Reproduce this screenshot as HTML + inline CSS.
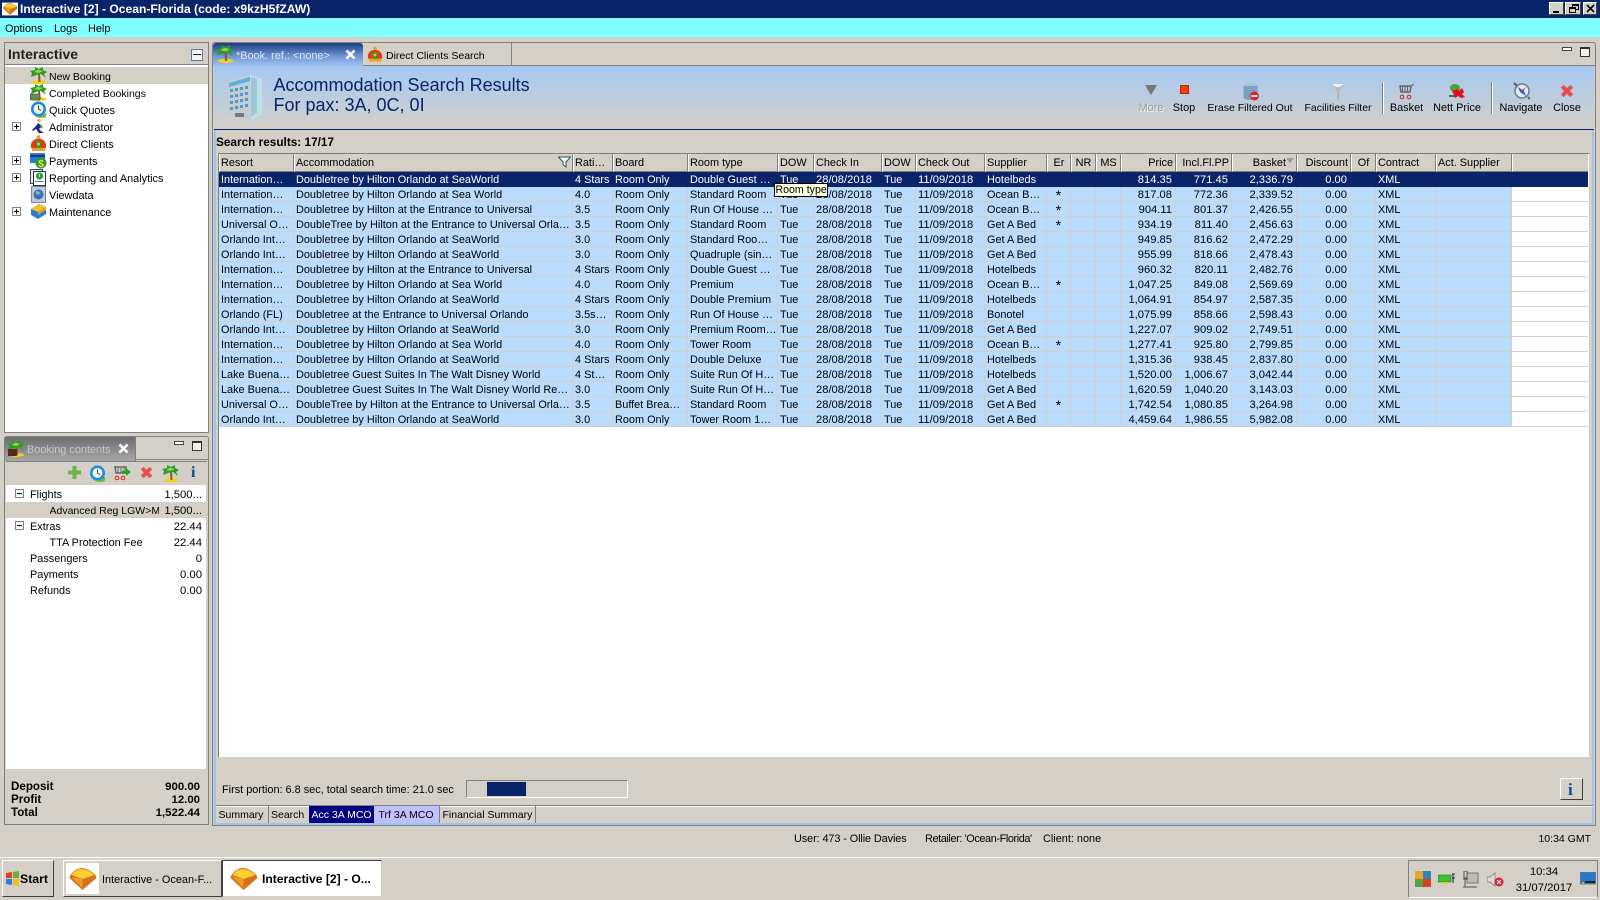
<!DOCTYPE html>
<html><head><meta charset="utf-8"><title>Interactive</title>
<style>
*{box-sizing:border-box}
html,body{margin:0;padding:0}
body{width:1600px;height:900px;overflow:hidden;background:#d4d0c8;position:relative;font:10.9px "Liberation Sans",sans-serif;color:#000}
.a,.t,svg.i{position:absolute}
.t{white-space:nowrap;line-height:14px;margin-top:1px}
.r{text-align:right}
.c{text-align:center;transform:translateX(-50%)}
.v{font-size:11.3px}
.bt{font-size:10.500px}
table{border-collapse:separate;border-spacing:0;table-layout:fixed;position:absolute;left:219px;width:1369px}
td{padding:2px 0 0 2px;height:15px;line-height:12px;white-space:nowrap;overflow:hidden;background:#badcff;border-right:1px solid #d4d0c8;border-bottom:1px solid #d4d0c8}
td.n{text-align:right;padding:2px 3px 0 0;font-size:11.2px}
td:nth-child(7),td:nth-child(9){font-size:11.2px}
td.m{text-align:center;padding:3px 0 0 0;line-height:11px;font-size:14px}
td.w{background:#fff;border-right:0}
tr.s td{background:#0a246a;color:#fff;border-color:#0a246a}
#h td{height:18px;background:#d4d0c8;border-bottom:1px solid #808080;border-right:1px solid #808080;border-left:1px solid #fff;line-height:16px;padding:1px 0 0 1px;font-size:10.9px}
#h td.n{padding:1px 2px 0 0}
.box{border:1px solid #808080}
.pm{position:absolute;width:9px;height:9px;border:1px solid #808080;background:#fff}
.pm:before{content:"";position:absolute;left:1px;top:3px;width:5px;height:1px;background:#000}
.pm.p:after{content:"";position:absolute;left:3px;top:1px;width:1px;height:5px;background:#000}
.btn{position:absolute;background:#d4d0c8;border:1px solid;border-color:#fff #404040 #404040 #fff}
</style></head><body>
<svg width="0" height="0" style="position:absolute"><defs>
<symbol id="palm" viewBox="0 0 17 17"><ellipse cx="9" cy="15" rx="7.500" ry="2" fill="#f0d020"/><path d="M8 6 L10 6 L10.500 15 L8.500 15Z" fill="#8a5a20"/><path d="M9 7 L1 10 L2 6 L0 4 L5 3 L5 0 L9 2 L13 0 L13 3 L17 5 L14 7 L16 11 L11 7Z" fill="#2e9a28"/><path d="M9 6 L4 5 L8 2.500 L13 4Z" fill="#8cd448"/></symbol>
<symbol id="man" viewBox="0 0 17 17"><circle cx="8.500" cy="2" r="1.800" fill="#f0a020"/><path d="M1 10a7 6 0 0 1 15 0v3H1Z" fill="#e04010"/><path d="M6 6h5v8H6Z" fill="#2a9a40"/><path d="M2 13h13v3H2Z" fill="#f0a020"/><circle cx="8.500" cy="9" r="1.500" fill="#f0c020"/></symbol>
<symbol id="clock" viewBox="0 0 17 17"><circle cx="8.500" cy="8" r="7.500" fill="#1a8ae0"/><circle cx="8.500" cy="8" r="5" fill="#f4f4f4"/><path d="M8.500 4.500V8L11 9.500" stroke="#444" fill="none"/><path d="M1 10a8 8 0 0 0 14 2l1.500 1-1 3.500-5.500.5Q5 17 1 10Z" fill="#60c030"/></symbol>
<symbol id="diamond" viewBox="0 0 30 24"><path d="M3 8 Q8 1 15 1 Q22 2 28 8 L29 11 L15 23 L2 11Z" fill="#d8701a"/><path d="M4 8 Q8 2 15 2 Q22 3 27 8 L15 12Z" fill="#fbd030"/><path d="M4 10 L15 12 L15 21Z" fill="#ec9a28"/></symbol>
<symbol id="x" viewBox="0 0 15 15"><path d="M1 4 L4 1 L7.500 4.500 L11 1 L14 4 L10.500 7.500 L14 11 L11 14 L7.500 10.500 L4 14 L1 11 L4.500 7.500Z" fill="#ec4a50" stroke="#c88" stroke-width=".5"/></symbol>
</defs></svg>

<!-- title bar -->
<div class="a" style="left:0;top:0;width:1600px;height:18px;background:#0a246a"></div>
<svg class="i" style="left:2px;top:1px" width="16" height="16" viewBox="0 0 30 24"><rect width="30" height="24" fill="#fff"/><use href="#diamond" width="30" height="24"/></svg>
<div class="t" style="left:20px;top:1px;color:#fff;font-size:12.100px;font-weight:bold">Interactive [2] - Ocean-Florida (code: x9kzH5fZAW)</div>
<div class="btn" style="left:1549px;top:2px;width:15px;height:13px"><div class="a" style="left:3px;top:8px;width:6px;height:2px;background:#000"></div></div>
<div class="btn" style="left:1565px;top:2px;width:16px;height:13px"><div class="a" style="left:6px;top:1px;width:7px;height:6px;border:1px solid #000;border-top-width:2px"></div><div class="a" style="left:3px;top:4px;width:7px;height:6px;border:1px solid #000;border-top-width:2px;background:#d4d0c8"></div></div>
<div class="btn" style="left:1583px;top:2px;width:14px;height:13px"><svg class="i" style="left:2px;top:1px" width="9" height="9"><path d="M1 1L8 8M8 1L1 8" stroke="#000" stroke-width="1.600"/></svg></div>
<!-- menu -->
<div class="a" style="left:0;top:18px;width:1600px;height:19px;background:#80ffff"></div>
<div class="t" style="left:5px;top:21px">Options</div>
<div class="t" style="left:54px;top:21px">Logs</div>
<div class="t" style="left:88px;top:21px">Help</div>

<!-- left panel -->
<div class="a box" style="left:4px;top:42px;width:205px;height:391px;background:#fff;border-color:#808080"></div>
<div class="a" style="left:5px;top:43px;width:203px;height:22px;background:#d4d0c8;border-bottom:1px solid #808080"></div>
<div class="t" style="left:8px;top:46px;font-size:14px;font-weight:bold;color:#222">Interactive</div>
<div class="a" style="left:191px;top:49px;width:12px;height:12px;border:1px solid #5a7aa8;background:#f4f4f4"><div class="a" style="left:1px;top:4px;width:8px;height:1px;background:#222"></div></div>
<div class="a" style="left:5px;top:67px;width:203px;height:17px;background:#d4d0c8"></div>
<svg class="i" style="left:30px;top:67px" width="17" height="17"><use href="#palm"/></svg>
<div class="t bt" style="left:49px;top:69px">New Booking</div>
<svg class="i" style="left:30px;top:84px" width="17" height="17"><use href="#palm"/><rect x="0" y="10" width="10" height="6" fill="#6a8a5a" stroke="#333" stroke-width=".5"/></svg>
<div class="t bt" style="left:49px;top:86px">Completed Bookings</div>
<svg class="i" style="left:30px;top:101px" width="17" height="17"><use href="#clock"/></svg>
<div class="t" style="left:49px;top:103px">Quick Quotes</div>
<div class="pm p" style="left:12px;top:122px"></div>
<svg class="i" style="left:30px;top:118px" width="17" height="17"><circle cx="9" cy="2.500" r="1.800" fill="#e8b060"/><path d="M8 5L12 8L9 11L13 15H9L6 11L3 13L2 12L6 8Z" fill="#1a2a8a"/><path d="M10 6l3 3-2 2Z" fill="#50a030"/><path d="M10 13l4 2H8Z" fill="#222"/></svg>
<div class="t" style="left:49px;top:120px">Administrator</div>
<svg class="i" style="left:30px;top:135px" width="17" height="17"><use href="#man"/></svg>
<div class="t" style="left:49px;top:137px">Direct Clients</div>
<div class="pm p" style="left:12px;top:156px"></div>
<svg class="i" style="left:30px;top:152px" width="17" height="17"><rect x="0" y="1" width="15" height="10" fill="#2a7ad8"/><rect x="0" y="3" width="15" height="2" fill="#123a80"/><circle cx="11" cy="11" r="5.500" fill="#2a9a30"/><text x="11" y="15" font-size="10" font-weight="bold" fill="#f0e040" text-anchor="middle" font-family="Liberation Sans">$</text></svg>
<div class="t" style="left:49px;top:154px">Payments</div>
<div class="pm p" style="left:12px;top:173px"></div>
<svg class="i" style="left:30px;top:169px" width="17" height="17"><rect x="0.500" y="0.500" width="12" height="14" fill="#e8eef4" stroke="#345"/><rect x="3.500" y="2.500" width="12" height="14" fill="#fff" stroke="#234"/><circle cx="9.500" cy="7" r="3.500" fill="#20a030"/><rect x="9" y="5" width="1" height="3" fill="#fff"/><rect x="5" y="12" width="9" height="1" fill="#678"/></svg>
<div class="t" style="left:49px;top:171px">Reporting and Analytics</div>
<svg class="i" style="left:30px;top:186px" width="17" height="17"><rect x="1.500" y="0.500" width="14" height="16" fill="#c0c8d8" stroke="#7a88a8"/><circle cx="8.500" cy="8.500" r="5" fill="#3a70c8"/><path d="M6 5l4 1-1 3-3-1Z" fill="#80c870"/></svg>
<div class="t" style="left:49px;top:188px">Viewdata</div>
<div class="pm p" style="left:12px;top:207px"></div>
<svg class="i" style="left:30px;top:203px" width="17" height="17"><path d="M1 6L9 1L16 4L16 11L8 16L1 12Z" fill="#2a7ad0"/><path d="M1 6L9 1L16 4L8 9Z" fill="#f0c030"/><path d="M8 9L16 4L16 7L8 12Z" fill="#e0a020"/></svg>
<div class="t" style="left:49px;top:205px">Maintenance</div>

<!-- booking panel -->
<div class="a box" style="left:4px;top:436px;width:205px;height:389px;border-radius:3px 3px 0 0"></div>
<div class="a" style="left:5px;top:437px;width:131px;height:24px;background:linear-gradient(#6e6e6e,#8f8f8f 60%,#a8a8a8);border-right:1px solid #808080"></div>
<div class="a" style="left:136px;top:459px;width:72px;height:1px;background:#808080"></div>
<svg class="i" style="left:7px;top:440px" width="18" height="17"><use href="#palm"/><rect x="1" y="9" width="9" height="7" fill="#5a2a18"/></svg>
<div class="t" style="left:27px;top:442px;color:#c8c8c8">Booking contents</div>
<svg class="i" style="left:118px;top:443px" width="11" height="11"><path d="M1.500 1.500L9.500 9.500M9.500 1.500L1.500 9.500" stroke="#fff" stroke-width="2.600"/></svg>
<div class="a" style="left:174px;top:441px;width:10px;height:4px;border:1px solid #444;background:#fff"></div>
<div class="a" style="left:192px;top:441px;width:10px;height:10px;border:1px solid #333;border-top-width:2px;background:#f0f0f0"></div>
<div class="a" style="left:6px;top:461px;width:201px;height:24px;background:#d4d0c8;border-top:1px solid #808080"></div>
<svg class="i" style="left:68px;top:466px" width="13" height="13"><path d="M4.500 0h4v4.500h4.500v4h-4.500v4.500h-4v-4.500H0v-4h4.500Z" fill="#74b050"/></svg>
<svg class="i" style="left:89px;top:465px" width="17" height="17"><use href="#clock"/></svg>
<svg class="i" style="left:114px;top:465px" width="17" height="16"><path d="M1 2h11v6H2Z" fill="none" stroke="#666" stroke-width="1.500"/><path d="M4 3v5M7 3v5M10 3v5" stroke="#666"/><circle cx="3" cy="13" r="1.800" fill="none" stroke="#e02020"/><circle cx="9" cy="13" r="1.800" fill="none" stroke="#e02020"/><path d="M8 6h4V3l5 4-5 4V8H8Z" fill="#10b020"/></svg>
<svg class="i" style="left:140px;top:466px" width="13" height="13" viewBox="0 0 15 15"><use href="#x"/></svg>
<svg class="i" style="left:162px;top:465px" width="17" height="17"><use href="#palm"/></svg>
<div class="t" style="left:191px;top:463px;font:bold 16px 'Liberation Serif',serif;line-height:17px;color:#0a4a9a">i</div>
<div class="a" style="left:6px;top:485px;width:200px;height:284px;background:#fff"></div>
<div class="a" style="left:6px;top:502px;width:200px;height:16px;background:#d4d0c8"></div>
<div class="pm" style="left:15px;top:489px"></div>
<div class="t" style="left:30px;top:487px">Flights</div><div class="t r v" style="right:1398px;top:487px">1,500...</div>
<div class="t bt" style="left:49.500px;top:503px;width:109px;overflow:hidden">Advanced Reg LGW&gt;MCO</div><div class="t r v" style="right:1398px;top:503px">1,500...</div>
<div class="pm" style="left:15px;top:521px"></div>
<div class="t" style="left:30px;top:519px">Extras</div><div class="t r v" style="right:1398px;top:519px">22.44</div>
<div class="t" style="left:49.500px;top:535px">TTA Protection Fee</div><div class="t r v" style="right:1398px;top:535px">22.44</div>
<div class="t" style="left:30px;top:551px">Passengers</div><div class="t r v" style="right:1398px;top:551px">0</div>
<div class="t" style="left:30px;top:567px">Payments</div><div class="t r v" style="right:1398px;top:567px">0.00</div>
<div class="t" style="left:30px;top:583px">Refunds</div><div class="t r v" style="right:1398px;top:583px">0.00</div>
<div class="t" style="left:11px;top:779px;font-weight:bold;font-size:11.6px">Deposit</div><div class="t r" style="right:1400px;top:779px;font-weight:bold;font-size:11.400px">900.00</div>
<div class="t" style="left:11px;top:792px;font-weight:bold;font-size:11.6px">Profit</div><div class="t r" style="right:1400px;top:792px;font-weight:bold;font-size:11.400px">12.00</div>
<div class="t" style="left:11px;top:805px;font-weight:bold;font-size:11.6px">Total</div><div class="t r" style="right:1400px;top:805px;font-weight:bold;font-size:11.400px">1,522.44</div>

<!-- main panel -->
<div class="a box" style="left:212px;top:42px;width:1384px;height:784px;border-radius:3px 3px 0 0"></div>
<div class="a" style="left:214px;top:65px;width:1380px;height:760px;border:2px solid #9cc4f0;border-top:0"></div>
<div class="a" style="left:213px;top:65px;width:1382px;height:1px;background:#808080"></div>
<div class="a" style="left:214px;top:66px;width:1380px;height:64px;background:linear-gradient(#a6c8f4,#d4d0c8);border-bottom:1px solid #0a246a"></div>
<div class="a" style="left:213px;top:43px;width:150px;height:24px;background:linear-gradient(180deg,#1b3c80,#6f96d4 55%,#a6c8f4);border-radius:3px 3px 0 0"></div>
<svg class="i" style="left:216px;top:45px" width="18" height="18"><use href="#palm"/></svg>
<div class="t" style="left:236px;top:48px;color:#dde8f8">*Book. ref.: &lt;none&gt;</div>
<svg class="i" style="left:345px;top:49px" width="11" height="11"><path d="M1.500 1.500L9.500 9.500M9.500 1.500L1.500 9.500" stroke="#fff" stroke-width="2.600"/></svg>
<div class="a" style="left:363px;top:43px;width:149px;height:23px;border-right:1px solid #808080;border-bottom:1px solid #808080"></div>
<svg class="i" style="left:367px;top:46px" width="16" height="17"><use href="#man"/></svg>
<div class="t bt" style="left:386px;top:48px">Direct Clients Search</div>
<div class="a" style="left:1562px;top:47px;width:10px;height:4px;border:1px solid #444;background:#fff"></div>
<div class="a" style="left:1580px;top:47px;width:10px;height:10px;border:1px solid #333;border-top-width:2px;background:#f0f0f0"></div>

<svg class="i" style="left:227px;top:73px" width="36" height="48" viewBox="0 0 36 48"><path d="M1 8L23 2L35 6V42L24 47L1 42Z" fill="#c4ccd0"/><path d="M23 2L35 6V42L24 47Z" fill="#bcdfe8"/><path d="M24 4L30 6V40L24 44Z" fill="#9cc8d4"/><path d="M2 10L23 4V8L2 14Z" fill="#58b0e0"/><g fill="#4c9cd4"><rect x="3" y="16" width="3" height="3"/><rect x="8" y="15" width="3" height="3"/><rect x="13" y="14" width="3" height="3"/><rect x="18" y="13" width="3" height="3"/><rect x="3" y="22" width="3" height="3"/><rect x="8" y="21" width="3" height="3"/><rect x="13" y="20" width="3" height="3"/><rect x="18" y="19" width="3" height="3"/><rect x="3" y="28" width="3" height="3"/><rect x="8" y="27" width="3" height="3"/><rect x="13" y="26" width="3" height="3"/><rect x="18" y="25" width="3" height="3"/><rect x="3" y="34" width="3" height="3"/><rect x="8" y="33" width="3" height="3"/><rect x="13" y="32" width="3" height="3"/><rect x="18" y="31" width="3" height="3"/></g><rect x="8" y="40" width="9" height="4" fill="#778"/></svg>
<div class="t" style="left:273.500px;top:74px;font-size:18px;line-height:20px;color:#0a246a">Accommodation Search Results</div>
<div class="t" style="left:273.500px;top:94px;font-size:18px;line-height:20px;color:#0a246a">For pax: 3A, 0C, 0I</div>

<svg class="i" style="left:1145px;top:85px" width="12" height="11"><path d="M0 0H12L6 10Z" fill="#777"/></svg>
<div class="t c" style="left:1151px;top:100px;color:#9a9a9a;text-shadow:1px 1px 0 #f4f4f4">More</div>
<div class="a" style="left:1180px;top:85px;width:9px;height:9px;background:#f04010;border:1px solid #c02000"></div>
<div class="t c" style="left:1184px;top:100px">Stop</div>
<svg class="i" style="left:1243px;top:83px" width="17" height="18"><ellipse cx="7.500" cy="3" rx="7" ry="2.500" fill="#a8c4d8"/><path d="M.5 3V15c0 1 3 2 7 2s7-1 7-2V3" fill="#7ca0c0"/><circle cx="11.500" cy="13" r="4.500" fill="#e02020"/><rect x="8.500" y="12" width="6" height="2" fill="#fff"/></svg>
<div class="t c bt" style="left:1250px;top:100px">Erase Filtered Out</div>
<svg class="i" style="left:1331px;top:83px" width="14" height="18"><path d="M1 1H13L8.500 8V17H6V8Z" fill="#b8b8b8"/><path d="M1 1H13L9 4H5Z" fill="#f0f0f0"/></svg>
<div class="t c bt" style="left:1338px;top:100px">Facilities Filter</div>
<div class="a" style="left:1382px;top:82px;width:1px;height:32px;background:#808080"></div>
<div class="a" style="left:1383px;top:82px;width:1px;height:32px;background:#fff"></div>
<svg class="i" style="left:1399px;top:83px" width="16" height="17"><path d="M1 3H12L11 9H2Z" fill="none" stroke="#666" stroke-width="1.500"/><path d="M3.500 3v6M6 3v6M8.500 3v6M12 3L15 1" stroke="#666"/><circle cx="3" cy="14" r="1.800" fill="none" stroke="#e02020"/><circle cx="10" cy="14" r="1.800" fill="none" stroke="#e02020"/></svg>
<div class="t c" style="left:1406.500px;top:100px">Basket</div>
<svg class="i" style="left:1449px;top:83px" width="17" height="17"><ellipse cx="6" cy="5" rx="5" ry="4" fill="#50a030"/><path d="M0 12h8v2H0Z" fill="#308030"/><path d="M3 8L8 6L10 8L13 5L15 9L13 11L16 14L12 15L9 13L6 15L5 12Z" fill="#e01020"/></svg>
<div class="t c" style="left:1457px;top:100px">Nett Price</div>
<div class="a" style="left:1491px;top:82px;width:1px;height:32px;background:#808080"></div>
<div class="a" style="left:1492px;top:82px;width:1px;height:32px;background:#fff"></div>
<svg class="i" style="left:1513px;top:82px" width="17" height="18"><circle cx="9" cy="9" r="7" fill="#dcecf8" stroke="#6a7a90" stroke-width="1.500"/><path d="M5 5L11 9L13 14L7 10Z" fill="#3060c0"/><path d="M9 8L13 5L10 10Z" fill="#e04020"/><path d="M1 1L4 4M15 15l2 2" stroke="#7a5a30" stroke-width="2"/></svg>
<div class="t c" style="left:1521px;top:100px">Navigate</div>
<svg class="i" style="left:1560px;top:84px" width="14" height="14" viewBox="0 0 15 15"><use href="#x"/></svg>
<div class="t c" style="left:1567px;top:100px">Close</div>

<div class="t" style="left:216px;top:134px;font-weight:bold;font-size:11.800px">Search results: 17/17</div>

<!-- grid -->
<div class="a" style="left:218px;top:153px;width:1372px;height:605px;background:#fff;border:1px solid #808080;border-right-color:#d4d0c8;border-bottom-color:#d4d0c8"></div>
<table id="h" style="top:154px"><colgroup><col style="width:75px"><col style="width:279px"><col style="width:40px"><col style="width:75px"><col style="width:90px"><col style="width:36px"><col style="width:68px"><col style="width:34px"><col style="width:69px"><col style="width:62px"><col style="width:24px"><col style="width:25px"><col style="width:25px"><col style="width:55px"><col style="width:56px"><col style="width:65px"><col style="width:54px"><col style="width:25px"><col style="width:60px"><col style="width:76px"><col style="width:76px"></colgroup>
<tr><td>Resort</td><td>Accommodation</td><td>Rati…</td><td>Board</td><td>Room type</td><td>DOW</td><td>Check In</td><td>DOW</td><td>Check Out</td><td>Supplier</td><td style="text-align:center;padding:1px 0 0">Er</td><td style="text-align:center;padding:1px 0 0">NR</td><td style="text-align:center;padding:1px 0 0">MS</td><td class="n">Price</td><td class="n">Incl.Fl.PP</td><td class="n" style="padding-right:10px">Basket</td><td class="n">Discount</td><td style="text-align:center;padding:1px 0 0">Of</td><td>Contract</td><td>Act. Supplier</td><td style="border-right:0"></td></tr></table>
<svg class="i" style="left:558px;top:156px" width="13" height="12"><path d="M.5 1H12.500L8 6V11L5 8.500V6Z" fill="#fff" stroke="#2a5a5a"/></svg>
<svg class="i" style="left:1286px;top:158px" width="8" height="6"><path d="M0 0H8L4 5Z" fill="#999"/></svg>
<table style="top:172px"><colgroup><col style="width:75px"><col style="width:279px"><col style="width:40px"><col style="width:75px"><col style="width:90px"><col style="width:36px"><col style="width:68px"><col style="width:34px"><col style="width:69px"><col style="width:62px"><col style="width:24px"><col style="width:25px"><col style="width:25px"><col style="width:55px"><col style="width:56px"><col style="width:65px"><col style="width:54px"><col style="width:25px"><col style="width:60px"><col style="width:76px"><col style="width:76px"></colgroup>
<tr class="s"><td>Internation…</td><td>Doubletree by Hilton Orlando at SeaWorld</td><td>4 Stars</td><td>Room Only</td><td>Double Guest …</td><td>Tue</td><td>28/08/2018</td><td>Tue</td><td>11/09/2018</td><td>Hotelbeds</td><td class="m"></td><td></td><td></td><td class="n">814.35</td><td class="n">771.45</td><td class="n">2,336.79</td><td class="n">0.00</td><td></td><td>XML</td><td></td><td class="w" style="background:#0a246a"></td></tr>
<tr><td>Internation…</td><td>Doubletree by Hilton Orlando at Sea World</td><td>4.0</td><td>Room Only</td><td>Standard Room</td><td>Tue</td><td>28/08/2018</td><td>Tue</td><td>11/09/2018</td><td>Ocean B…</td><td class="m">*</td><td></td><td></td><td class="n">817.08</td><td class="n">772.36</td><td class="n">2,339.52</td><td class="n">0.00</td><td></td><td>XML</td><td></td><td class="w"></td></tr>
<tr><td>Internation…</td><td>Doubletree by Hilton at the Entrance to Universal</td><td>3.5</td><td>Room Only</td><td>Run Of House …</td><td>Tue</td><td>28/08/2018</td><td>Tue</td><td>11/09/2018</td><td>Ocean B…</td><td class="m">*</td><td></td><td></td><td class="n">904.11</td><td class="n">801.37</td><td class="n">2,426.55</td><td class="n">0.00</td><td></td><td>XML</td><td></td><td class="w"></td></tr>
<tr><td>Universal O…</td><td>DoubleTree by Hilton at the Entrance to Universal Orla…</td><td>3.5</td><td>Room Only</td><td>Standard Room</td><td>Tue</td><td>28/08/2018</td><td>Tue</td><td>11/09/2018</td><td>Get A Bed</td><td class="m">*</td><td></td><td></td><td class="n">934.19</td><td class="n">811.40</td><td class="n">2,456.63</td><td class="n">0.00</td><td></td><td>XML</td><td></td><td class="w"></td></tr>
<tr><td>Orlando Int…</td><td>Doubletree by Hilton Orlando at SeaWorld</td><td>3.0</td><td>Room Only</td><td>Standard Roo…</td><td>Tue</td><td>28/08/2018</td><td>Tue</td><td>11/09/2018</td><td>Get A Bed</td><td class="m"></td><td></td><td></td><td class="n">949.85</td><td class="n">816.62</td><td class="n">2,472.29</td><td class="n">0.00</td><td></td><td>XML</td><td></td><td class="w"></td></tr>
<tr><td>Orlando Int…</td><td>Doubletree by Hilton Orlando at SeaWorld</td><td>3.0</td><td>Room Only</td><td>Quadruple (sin…</td><td>Tue</td><td>28/08/2018</td><td>Tue</td><td>11/09/2018</td><td>Get A Bed</td><td class="m"></td><td></td><td></td><td class="n">955.99</td><td class="n">818.66</td><td class="n">2,478.43</td><td class="n">0.00</td><td></td><td>XML</td><td></td><td class="w"></td></tr>
<tr><td>Internation…</td><td>Doubletree by Hilton at the Entrance to Universal</td><td>4 Stars</td><td>Room Only</td><td>Double Guest …</td><td>Tue</td><td>28/08/2018</td><td>Tue</td><td>11/09/2018</td><td>Hotelbeds</td><td class="m"></td><td></td><td></td><td class="n">960.32</td><td class="n">820.11</td><td class="n">2,482.76</td><td class="n">0.00</td><td></td><td>XML</td><td></td><td class="w"></td></tr>
<tr><td>Internation…</td><td>Doubletree by Hilton Orlando at Sea World</td><td>4.0</td><td>Room Only</td><td>Premium</td><td>Tue</td><td>28/08/2018</td><td>Tue</td><td>11/09/2018</td><td>Ocean B…</td><td class="m">*</td><td></td><td></td><td class="n">1,047.25</td><td class="n">849.08</td><td class="n">2,569.69</td><td class="n">0.00</td><td></td><td>XML</td><td></td><td class="w"></td></tr>
<tr><td>Internation…</td><td>Doubletree by Hilton Orlando at SeaWorld</td><td>4 Stars</td><td>Room Only</td><td>Double Premium</td><td>Tue</td><td>28/08/2018</td><td>Tue</td><td>11/09/2018</td><td>Hotelbeds</td><td class="m"></td><td></td><td></td><td class="n">1,064.91</td><td class="n">854.97</td><td class="n">2,587.35</td><td class="n">0.00</td><td></td><td>XML</td><td></td><td class="w"></td></tr>
<tr><td>Orlando (FL)</td><td>Doubletree at the Entrance to Universal Orlando</td><td>3.5s…</td><td>Room Only</td><td>Run Of House …</td><td>Tue</td><td>28/08/2018</td><td>Tue</td><td>11/09/2018</td><td>Bonotel</td><td class="m"></td><td></td><td></td><td class="n">1,075.99</td><td class="n">858.66</td><td class="n">2,598.43</td><td class="n">0.00</td><td></td><td>XML</td><td></td><td class="w"></td></tr>
<tr><td>Orlando Int…</td><td>Doubletree by Hilton Orlando at SeaWorld</td><td>3.0</td><td>Room Only</td><td>Premium Room…</td><td>Tue</td><td>28/08/2018</td><td>Tue</td><td>11/09/2018</td><td>Get A Bed</td><td class="m"></td><td></td><td></td><td class="n">1,227.07</td><td class="n">909.02</td><td class="n">2,749.51</td><td class="n">0.00</td><td></td><td>XML</td><td></td><td class="w"></td></tr>
<tr><td>Internation…</td><td>Doubletree by Hilton Orlando at Sea World</td><td>4.0</td><td>Room Only</td><td>Tower Room</td><td>Tue</td><td>28/08/2018</td><td>Tue</td><td>11/09/2018</td><td>Ocean B…</td><td class="m">*</td><td></td><td></td><td class="n">1,277.41</td><td class="n">925.80</td><td class="n">2,799.85</td><td class="n">0.00</td><td></td><td>XML</td><td></td><td class="w"></td></tr>
<tr><td>Internation…</td><td>Doubletree by Hilton Orlando at SeaWorld</td><td>4 Stars</td><td>Room Only</td><td>Double Deluxe</td><td>Tue</td><td>28/08/2018</td><td>Tue</td><td>11/09/2018</td><td>Hotelbeds</td><td class="m"></td><td></td><td></td><td class="n">1,315.36</td><td class="n">938.45</td><td class="n">2,837.80</td><td class="n">0.00</td><td></td><td>XML</td><td></td><td class="w"></td></tr>
<tr><td>Lake Buena…</td><td>Doubletree Guest Suites In The Walt Disney World</td><td>4 St…</td><td>Room Only</td><td>Suite Run Of H…</td><td>Tue</td><td>28/08/2018</td><td>Tue</td><td>11/09/2018</td><td>Hotelbeds</td><td class="m"></td><td></td><td></td><td class="n">1,520.00</td><td class="n">1,006.67</td><td class="n">3,042.44</td><td class="n">0.00</td><td></td><td>XML</td><td></td><td class="w"></td></tr>
<tr><td>Lake Buena…</td><td>Doubletree Guest Suites In The Walt Disney World Re…</td><td>3.0</td><td>Room Only</td><td>Suite Run Of H…</td><td>Tue</td><td>28/08/2018</td><td>Tue</td><td>11/09/2018</td><td>Get A Bed</td><td class="m"></td><td></td><td></td><td class="n">1,620.59</td><td class="n">1,040.20</td><td class="n">3,143.03</td><td class="n">0.00</td><td></td><td>XML</td><td></td><td class="w"></td></tr>
<tr><td>Universal O…</td><td>DoubleTree by Hilton at the Entrance to Universal Orla…</td><td>3.5</td><td>Buffet Brea…</td><td>Standard Room</td><td>Tue</td><td>28/08/2018</td><td>Tue</td><td>11/09/2018</td><td>Get A Bed</td><td class="m">*</td><td></td><td></td><td class="n">1,742.54</td><td class="n">1,080.85</td><td class="n">3,264.98</td><td class="n">0.00</td><td></td><td>XML</td><td></td><td class="w"></td></tr>
<tr><td>Orlando Int…</td><td>Doubletree by Hilton Orlando at SeaWorld</td><td>3.0</td><td>Room Only</td><td>Tower Room 1…</td><td>Tue</td><td>28/08/2018</td><td>Tue</td><td>11/09/2018</td><td>Get A Bed</td><td class="m"></td><td></td><td></td><td class="n">4,459.64</td><td class="n">1,986.55</td><td class="n">5,982.08</td><td class="n">0.00</td><td></td><td>XML</td><td></td><td class="w"></td></tr>
</table>
<div class="t" style="left:773.500px;top:183px;margin-top:0;width:54px;height:14px;background:#ffffe1;border:1px solid #000;line-height:12px;padding-left:1px;font-size:10.6px">Room type</div>

<!-- bottom of main -->
<div class="t" style="left:222px;top:782px">First portion: 6.8 sec, total search time: 21.0 sec</div>
<div class="a" style="left:466px;top:780px;width:162px;height:18px;border:1px solid;border-color:#808080 #fff #fff #808080"></div>
<div class="a" style="left:487px;top:782px;width:39px;height:14px;background:#0a246a"></div>
<div class="btn" style="left:1560px;top:778px;width:23px;height:22px;border-color:#fff #404040 #404040 #fff"><div class="t" style="left:7px;top:1px;font:bold 17px 'Liberation Serif',serif;line-height:18px;color:#0a4a9a">i</div></div>
<div class="a" style="left:216px;top:805px;width:1377px;height:1px;background:#808080"></div>
<div class="a" style="left:216px;top:806px;width:1377px;height:1px;background:#fff"></div>
<div class="a" style="left:268px;top:806px;width:1px;height:17px;background:#808080"></div>
<div class="a" style="left:309px;top:806px;width:65px;height:17px;background:#000080"></div>
<div class="a" style="left:374px;top:806px;width:65px;height:17px;background:#c0c0ff"></div>
<div class="a" style="left:439px;top:806px;width:1px;height:17px;background:#808080"></div>
<div class="a" style="left:535px;top:806px;width:1px;height:17px;background:#808080"></div>
<div class="t bt" style="left:218.500px;top:807px">Summary</div>
<div class="t bt" style="left:271px;top:807px">Search</div>
<div class="t bt" style="left:311.500px;top:807px;color:#fff">Acc 3A MCO</div>
<div class="t bt" style="left:378.500px;top:807px">Trf 3A MCO</div>
<div class="t bt" style="left:442.500px;top:807px">Financial Summary</div>

<!-- status -->
<div class="t" style="left:794px;top:831px;letter-spacing:-.1px">User: 473 - Ollie Davies</div>
<div class="t" style="left:925px;top:831px;letter-spacing:-.4px">Retailer: 'Ocean-Florida'</div>
<div class="t" style="left:1043px;top:831px">Client: none</div>
<div class="t r bt" style="right:9px;top:831px">10:34 GMT</div>

<!-- taskbar -->
<div class="a" style="left:0;top:857px;width:1600px;height:1px;background:#fff"></div>
<div class="btn" style="left:2px;top:860px;width:52px;height:37px"></div>
<svg class="i" style="left:5px;top:871px" width="15" height="15"><path d="M1 2L7 1V7H1Z" fill="#e04020"/><path d="M8 1L14 0V7H8Z" fill="#70b030"/><path d="M1 8H7V14L1 13Z" fill="#2a80e0"/><path d="M8 8H14V15L8 14Z" fill="#f0c020"/></svg>
<div class="t" style="left:20px;top:871px;font-weight:bold;font-size:12.300px">Start</div>
<div class="btn" style="left:63px;top:860px;width:159px;height:37px"></div>
<div class="a" style="left:66px;top:863px;width:33px;height:31px;background:#fff"></div>
<svg class="i" style="left:67px;top:867px" width="31" height="24"><use href="#diamond"/></svg>
<div class="t" style="left:102px;top:872px">Interactive - Ocean-F...</div>
<div class="a" style="left:222px;top:860px;width:160px;height:37px;background:#fff;border:1px solid;border-color:#404040 #d4d0c8 #d4d0c8 #404040"></div>
<svg class="i" style="left:228px;top:867px" width="31" height="24"><use href="#diamond"/></svg>
<div class="t" style="left:262px;top:871px;font-weight:bold;font-size:12.100px">Interactive [2] - O...</div>
<div class="a" style="left:1408px;top:860px;width:190px;height:38px;border:1px solid;border-color:#808080 #808080 #fff #808080"></div>
<svg class="i" style="left:1415px;top:871px" width="17" height="17"><rect width="8" height="8" x="0" y="0" fill="#f0a030"/><rect width="8" height="8" x="8" y="0" fill="#2a88b8"/><rect width="8" height="8" x="0" y="8" fill="#58a040"/><rect width="8" height="8" x="8" y="8" fill="#d84020"/></svg>
<svg class="i" style="left:1438px;top:873px" width="17" height="13"><rect x="0" y="2" width="13" height="7" fill="#40c030" stroke="#206020" stroke-width=".5"/><rect x="4" y="9" width="6" height="2" fill="#e0d020"/><path d="M14 1h3M15 1v9M14 5h3" stroke="#222"/></svg>
<svg class="i" style="left:1462px;top:871px" width="17" height="17"><rect x="5" y="2" width="11" height="10" fill="#bbb" stroke="#777"/><path d="M2 0h3v7H2Z M1 8h5M3 8v8M1 16h14" fill="none" stroke="#555"/></svg>
<svg class="i" style="left:1487px;top:871px" width="17" height="17"><path d="M0 6h3l5-4v13l-5-4H0Z" fill="#ddd" stroke="#888"/><circle cx="12" cy="11" r="4.500" fill="#e02030"/><path d="M10 9l4 4M14 9l-4 4" stroke="#fff"/></svg>
<div class="t c" style="left:1544px;top:864px;font-size:11.300px">10:34</div>
<div class="t c" style="left:1544px;top:880px;font-size:11.300px">31/07/2017</div>
<svg class="i" style="left:1580px;top:872px" width="16" height="14"><rect x="0" y="0" width="16" height="12" fill="#2a78c8" stroke="#778"/><rect x="5" y="9" width="10" height="2" fill="#222"/><rect x="2" y="10" width="2" height="2" fill="#e0b020"/></svg>
</body></html>
